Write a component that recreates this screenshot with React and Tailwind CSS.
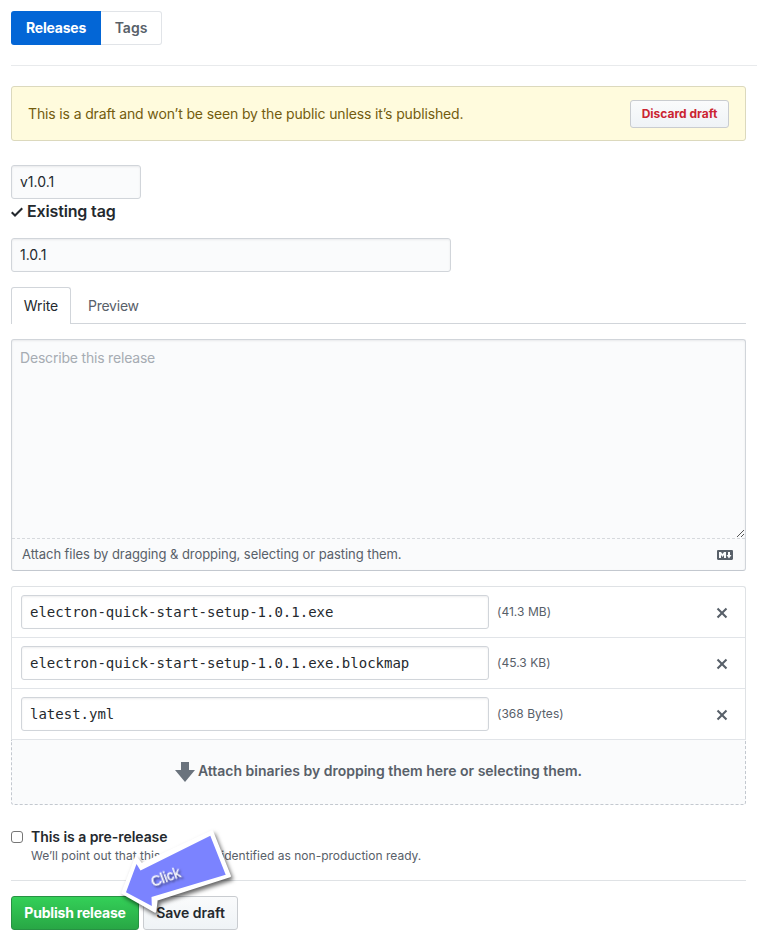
import React from "react";

const files = [
  { name: "electron-quick-start-setup-1.0.1.exe", size: "(41.3 MB)" },
  { name: "electron-quick-start-setup-1.0.1.exe.blockmap", size: "(45.3 KB)" },
  { name: "latest.yml", size: "(368 Bytes)" },
];

const inset = "shadow-[inset_0_1px_2px_rgba(27,31,35,0.075)]";

function Check() {
  return (
    <svg width="12" height="16" viewBox="0 0 12 16" fill="currentColor" className="shrink-0">
      <path d="M12 5l-8 8-4-4 1.5-1.5L4 10l6.5-6.5L12 5z" />
    </svg>
  );
}

function Cross() {
  return (
    <svg width="12" height="16" viewBox="0 0 12 16" fill="currentColor" className="mt-0.5 shrink-0">
      <path d="M7.48 8l3.75 3.75-1.48 1.48L6 9.48l-3.75 3.75-1.48-1.48L4.52 8 .77 4.25l1.48-1.48L6 6.52l3.75-3.75 1.48 1.48L7.48 8z" />
    </svg>
  );
}

function Markdown() {
  return (
    <svg width="16" height="16" viewBox="0 0 16 16" fill="currentColor" className="shrink-0">
      <path
        fillRule="evenodd"
        d="M14.85 3H1.15C.52 3 0 3.52 0 4.15v7.69C0 12.48.52 13 1.15 13h13.69c.64 0 1.15-.52 1.15-1.15v-7.7C16 3.52 15.48 3 14.85 3zM9 11H7V8L5.5 9.92 4 8v3H2V5h2l1.5 2L7 5h2v6zm2.99.5L9.5 8H11V5h2v3h1.5l-2.51 3.5z"
      />
    </svg>
  );
}

export default function App() {
  return (
    <div className="h-[943px] w-[757px] overflow-hidden bg-white pl-[11px] pt-[11px] font-['Inter',sans-serif] text-[14px] leading-[21px] text-[#24292e]">
      <nav className="flex h-[34px] font-semibold">
        <a className="flex w-[90px] items-center justify-center rounded-l-[3px] bg-[#0366d6] pb-0.5 font-bold tracking-[-0.22px] text-white">Releases</a>
        <a className="flex w-[61px] items-center justify-center rounded-r-[3px] border border-l-0 border-[#e1e4e8] pb-0.5 text-[#586069]">Tags</a>
      </nav>
      <div className="mt-5 h-px bg-[#e8eaec]" />

      <main className="w-[735px]">
        <div className="mt-5 flex h-[55px] items-center justify-between rounded-[3px] border border-[#dcd9bd] bg-[#fffbdd] px-4 text-[#735c0f]">
          <span className="tracking-[-0.14px]">This is a draft and won’t be seen by the public unless it’s published.</span>
          <button className="h-7 w-[99px] rounded-[3px] border border-[#c9ccd0] bg-linear-to-b from-[#fafbfc] to-[#eff3f6] text-[12px] font-bold text-[#cb2431]">Discard draft</button>
        </div>

        <div className={`mt-6 flex h-[34px] w-[130px] items-center rounded-[3px] border border-[#d1d5da] bg-[#fafbfc] px-2 pb-0.5 ${inset}`}>v1.0.1</div>
        <div className="flex h-[25px] items-center gap-1 text-[16px] font-semibold tracking-[-0.15px]">
          <Check />
          Existing tag
        </div>
        <div className={`mt-3.5 flex h-[34px] w-[440px] items-center rounded-[3px] border border-[#d1d5da] bg-[#fafbfc] px-2 pb-0.5 ${inset}`}>1.0.1</div>

        <div className="mt-[15px] flex h-[37px] border-b border-[#d1d5da]">
          <div className="flex h-[37px] w-[60px] items-center justify-center rounded-t-[3px] border border-b-0 border-[#d1d5da] bg-white pb-0.5 tracking-[-0.1px]">Write</div>
          <div className="flex items-center pl-[17px] tracking-[-0.25px] text-[#586069]">Preview</div>
        </div>

        <div className={`mt-[15px] flex h-[232px] flex-col rounded-[3px] border border-[#d1d5da] border-b-[#c3c8cf] bg-[#fafbfc] ${inset}`}>
          <div className="flex flex-1 items-end justify-between">
            <span className="self-start px-2 pt-[7px] tracking-[-0.19px] text-[#a6acb3]">Describe this release</span>
            <svg width="9" height="9" viewBox="0 0 9 9" stroke="#555" className="shrink-0">
              <path d="M1 8L8 1M5 8L8 5" strokeWidth="1" />
            </svg>
          </div>
          <div className="flex h-8 items-center justify-between border-t border-dashed border-[#d6d9dd] pl-2.5 pr-3 text-[13px] tracking-[-0.06px] text-[#586069]">
            <span>Attach files by dragging &amp; dropping, selecting or pasting them.</span>
            <Markdown />
          </div>
        </div>

        <div className="mt-[15px] rounded-t-[3px] border border-b-0 border-[#dfe2e5]">
          {files.map((file) => (
            <div key={file.name} className="flex h-[51px] items-center border-b border-[#e1e4e8] pl-[9px] pr-[17px] text-[#586069]">
              <div className={`flex h-[34px] w-[468px] items-center rounded-[3px] border border-[#d1d5da] px-2 font-['DejaVu_Sans_Mono',monospace] text-[14px] text-[#24292e] ${inset}`}>{file.name}</div>
              <span className="ml-2 flex-1 pb-0.5 text-[12px] tracking-[0.03px]">{file.size}</span>
              <Cross />
            </div>
          ))}
        </div>
        <div className="flex h-[65px] items-center justify-center gap-[3px] rounded-b-[3px] border border-t-0 border-dashed border-[#c3c8cf] bg-[#fafbfc] font-semibold text-[#586069]">
          <svg width="20" height="20" viewBox="0 0 20 20" fill="#6a737d">
            <path d="M6 0h8v8h6L10 20 0 8h6z" />
          </svg>
          <span className="pb-[3px]">Attach binaries by dropping them here or selecting them.</span>
        </div>

        <div className="mt-[21px] flex gap-2">
          <span className="mt-[5px] size-3 rounded-[3px] border border-[#767676] bg-white" />
          <div>
            <div className="font-semibold tracking-[-0.05px]">This is a pre-release</div>
            <div className="mt-px text-[12px] leading-[16px] tracking-[0.015px] text-[#586069]">We’ll point out that this release is identified as non-production ready.</div>
          </div>
        </div>
        <div className="mt-4 h-px bg-[#dfe2e5]" />
        <div className="relative mt-[15px] flex h-[34px] gap-1 font-semibold">
          <button className="w-32 rounded-[3px] border border-[#279243] bg-linear-to-b from-[#34d058] to-[#28a745] pb-0.5 font-bold tracking-[-0.2px] text-white">Publish release</button>
          <button className="w-[95px] rounded-[3px] border border-[#c9ccd0] bg-linear-to-b from-[#fafbfc] to-[#eff3f6] pb-0.5">Save draft</button>
          <svg width="140" height="100" viewBox="110 825 140 100" className="absolute left-[99px] top-[-71px]">
            <g className="drop-shadow-[2px_3px_2px_rgba(0,0,0,0.6)]">
              <path d="M212 831.500L229.700 876L156.500 899.500L155 911.500L122.500 893L136 857.500L141.500 864.500Z" fill="#fff" stroke="#fff" strokeWidth="2.500" strokeLinejoin="round" />
            </g>
            <path d="M210.300 835.700L225.700 874.700L151.500 897L151.800 906L126 892.300L136.500 864L140.500 870.500Z" fill="#7b83ff" />
            <text x="153" y="886.500" transform="rotate(-20 153 886.500)" fill="#fff" fontFamily="Liberation Sans" fontSize="14" fontWeight="400" stroke="#fff" strokeWidth="0.300" className="drop-shadow-[1px_2px_1px_rgba(0,0,0,0.5)]">Click</text>
          </svg>
        </div>
      </main>
    </div>
  );
}
